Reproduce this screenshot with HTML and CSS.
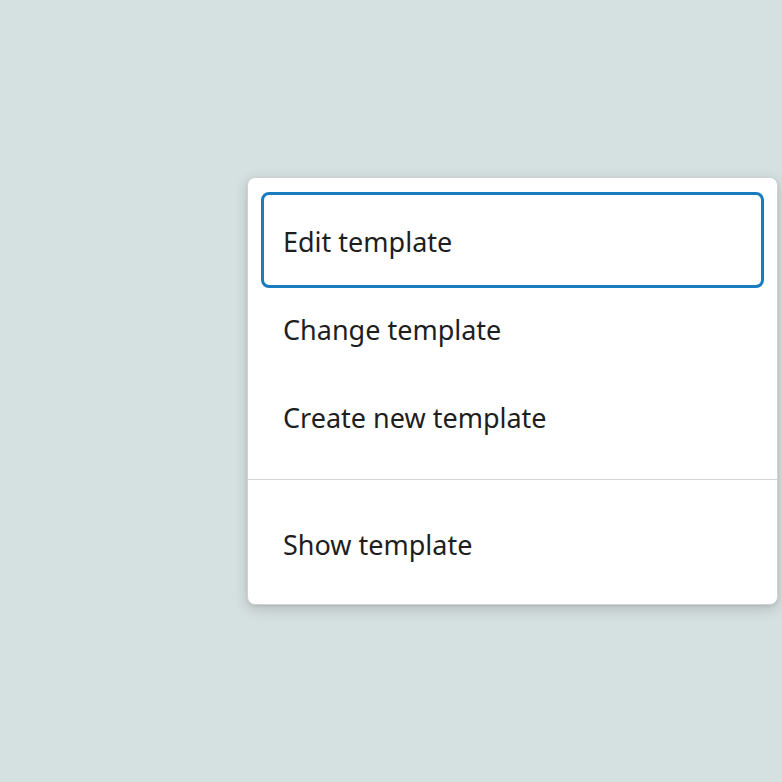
FILE: index.html
```html
<!DOCTYPE html>
<html lang="en">
<head>
<meta charset="utf-8">
<title>Template menu</title>
<link rel="stylesheet" href="styles.css">
</head>
<body>
<div class="stage">
  <div class="menu" role="menu">
    <div class="group">
      <button class="item is-focused" role="menuitem">Edit template</button>
      <button class="item" role="menuitem">Change template</button>
      <button class="item" role="menuitem">Create new template</button>
    </div>
    <div class="group group-last">
      <button class="item" role="menuitem">Show template</button>
    </div>
  </div>
</div>
</body>
</html>
```

FILE: styles.css
```css
html, body {
  margin: 0;
  padding: 0;
  background: #d5e0e0;
  height: 100%;
}

.stage {
  padding: 177px 0 0 247px;
}

.menu {
  width: 531px;
  box-sizing: border-box;
  background: #ffffff;
  border: 1px solid #cfd3d3;
  border-radius: 8px;
  box-shadow: 0 4px 14px rgba(0, 0, 0, 0.16), 0 1px 3px rgba(0, 0, 0, 0.08);
  font-family: "Noto Sans", "Open Sans", sans-serif;
}

.group {
  display: flex;
  flex-direction: column;
  padding: 17px 16px 19px 16px;
  border-bottom: 1px solid #d4d4d4;
}

.group-last {
  border-bottom: none;
  padding: 19px 16px 17px 16px;
}

.item {
  display: flex;
  align-items: center;
  height: 88px;
  padding: 3px 0 0 19px;
  margin: 0;
  border: none;
  background: transparent;
  font-family: inherit;
  font-size: 27px;
  color: #1e1e1e;
  text-align: left;
  border-radius: 5px;
}

.item.is-focused {
  height: 90px;
  margin-bottom: -1px;
  outline: 3px solid #1a7cc0;
  outline-offset: 0;
}
```
